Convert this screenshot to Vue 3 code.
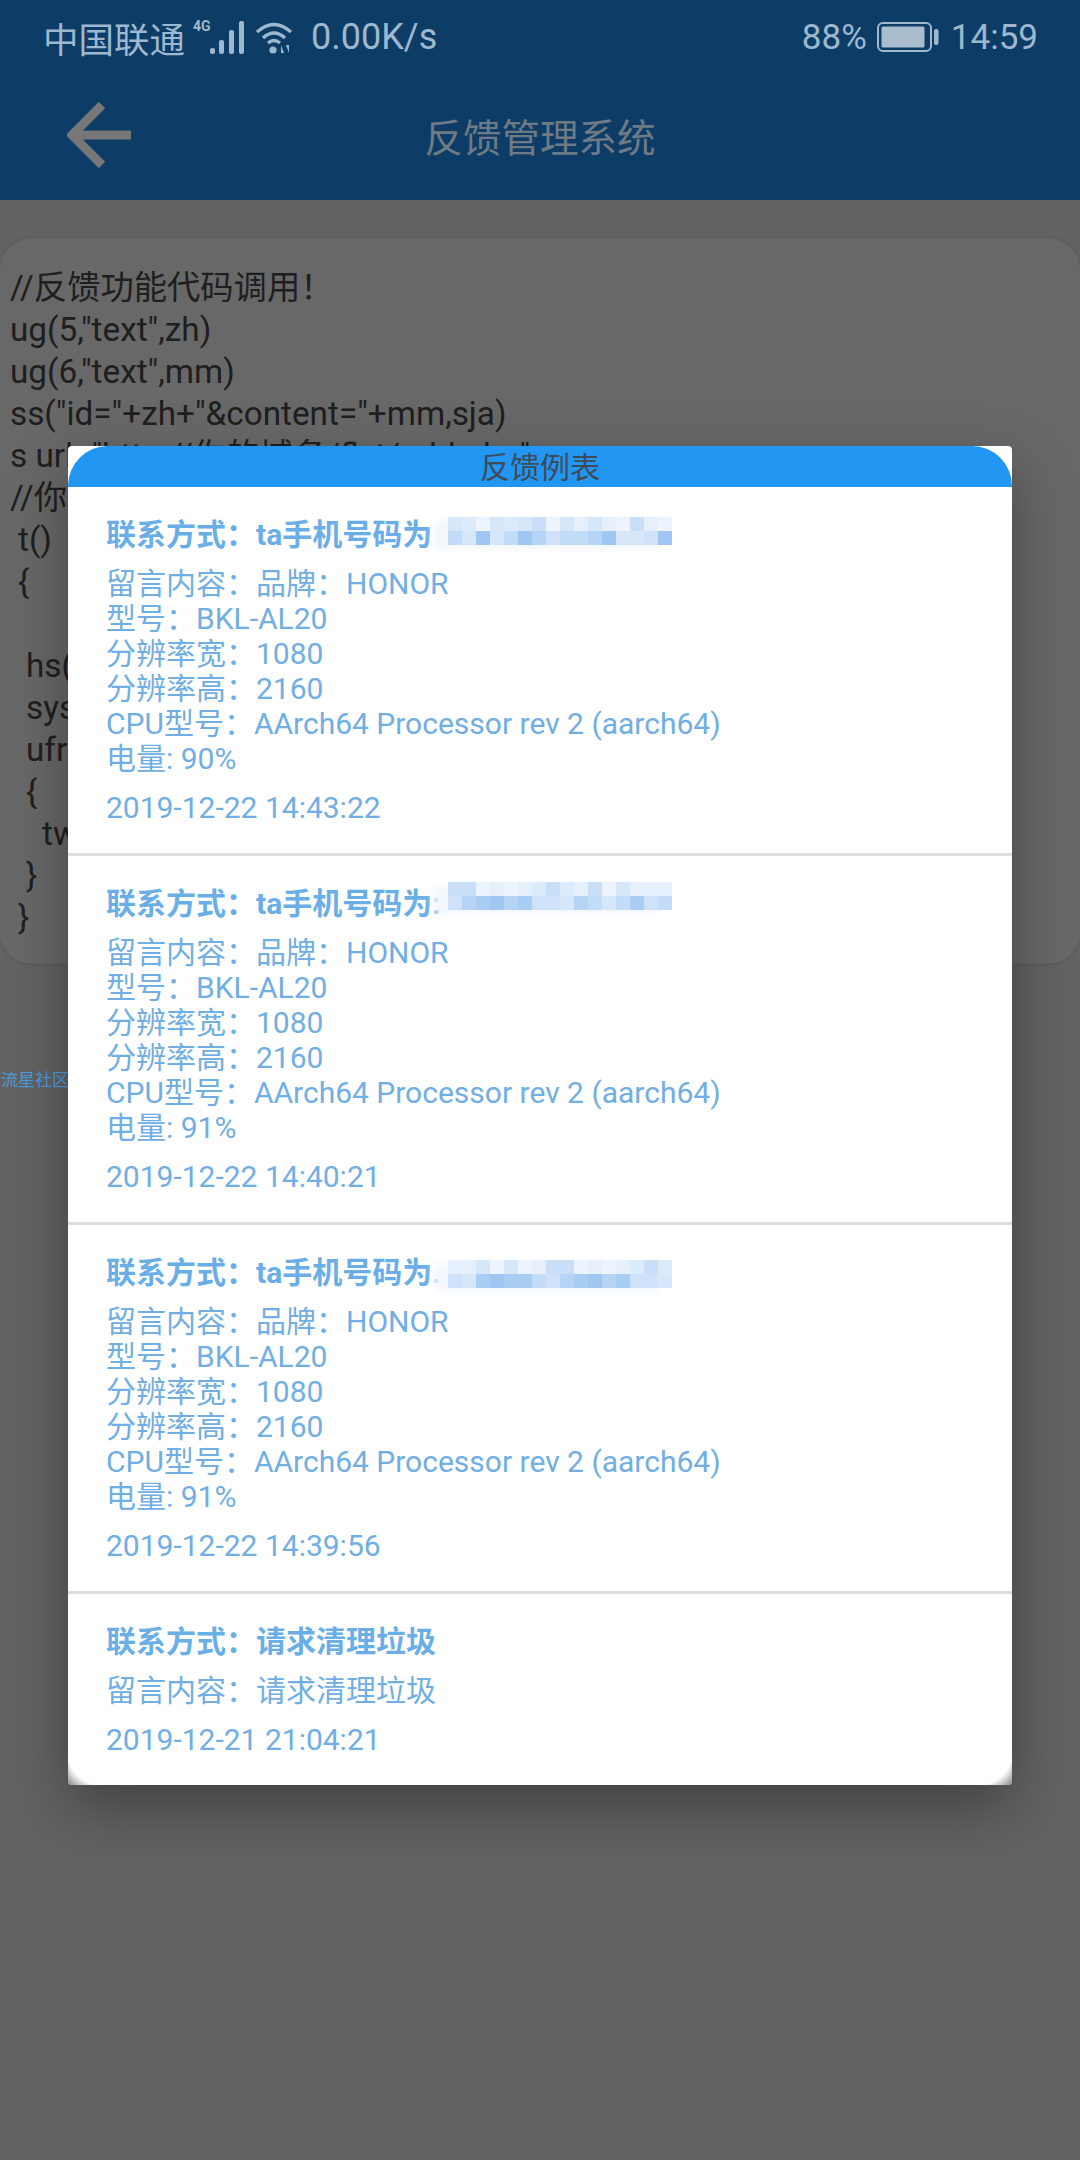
<script setup>
const paleRow = ['#d6e7fa', '#e6f0fc', '#c9dff8', '#edf4fd', '#dcebfb']
const deepRow = ['#a9cdf3', '#b6d4f5', '#c3dcf7', '#d6e7fa', '#9fc7f1', '#cfe2f9']

function mosaic(seed) {
  const cells = []
  let v = seed
  for (let i = 0; i < 32; i++) {
    v = (v * 31 + 17) % 97
    const row = i < 16 ? paleRow : deepRow
    cells.push(row[v % row.length])
  }
  return cells
}

const spec = [
  '留言内容：品牌：HONOR',
  '型号：BKL-AL20',
  '分辨率宽：1080',
  '分辨率高：2160',
  'CPU型号：AArch64 Processor rev 2 (aarch64)'
]

const items = [
  { title: '联系方式：ta手机号码为', masked: true, seed: 5, shift: 0, lines: [...spec, '电量: 90%'], date: '2019-12-22 14:43:22' },
  { title: '联系方式：ta手机号码为:', masked: true, seed: 11, shift: -4, lines: [...spec, '电量: 91%'], date: '2019-12-22 14:40:21' },
  { title: '联系方式：ta手机号码为.', masked: true, seed: 23, shift: 5, lines: [...spec, '电量: 91%'], date: '2019-12-22 14:39:56' },
  { title: '联系方式：请求清理垃圾', masked: false, lines: ['留言内容：请求清理垃圾'], date: '2019-12-21 21:04:21' }
]

const codeLines = [
  { t: '//反馈功能代码调用！', c: 'i0' },
  { t: 'ug(5,"text",zh)', c: 'i0' },
  { t: 'ug(6,"text",mm)', c: 'i0' },
  { t: 'ss("id="+zh+"&content="+mm,sja)', c: 'i0' },
  { t: 's url="http://你的域名/flxt/add.php"', c: 'i0' },
  { t: '//你的代码', c: 'i0' },
  { t: 't()', c: 'i1' },
  { t: '{', c: 'i1' },
  { t: '\u00a0', c: 'i0' },
  { t: 'hs()', c: 'i2' },
  { t: 'sys', c: 'i2' },
  { t: 'ufr', c: 'i2' },
  { t: '{', c: 'i2' },
  { t: 'tw', c: 'i3' },
  { t: '}', c: 'i2' },
  { t: '}', c: 'i1' }
]
</script>

<template>
  <div class="page">
    <header class="top">
      <div class="status">
        <span class="carrier">中国联通</span>
        <span class="net">4G</span>
        <svg class="signal" width="35" height="33" viewBox="0 0 35 33">
          <rect x="0" y="27" width="5" height="6" rx="2" fill="#9db8cf" />
          <rect x="9" y="19" width="5" height="14" rx="2" fill="#9db8cf" />
          <rect x="19" y="9" width="5" height="24" rx="2" fill="#9db8cf" />
          <rect x="29" y="0" width="5" height="33" rx="2" fill="#9db8cf" />
        </svg>
        <svg class="wifi" width="40" height="33" viewBox="0 0 40 33">
          <path d="M2 11 Q19 -4 36 11" fill="none" stroke="#9db8cf" stroke-width="3.4" />
          <path d="M8 17 Q19 7 30 17" fill="none" stroke="#9db8cf" stroke-width="3.4" />
          <path d="M13 22 Q19 17 25 22" fill="none" stroke="#9db8cf" stroke-width="3.2" />
          <circle cx="18" cy="29" r="3.6" fill="#9db8cf" />
          <path d="M26 32 L26 24 L29 32 Z M31 24 L34 32 L34 24 Z" fill="#9db8cf" />
        </svg>
        <span class="speed">0.00K/s</span>
        <span class="spacer"></span>
        <span class="pct">88%</span>
        <svg class="battery" width="62" height="30" viewBox="0 0 62 30">
          <rect x="1" y="1" width="53" height="28" rx="5" fill="none" stroke="#9db8cf" stroke-width="2" />
          <rect x="4.500" y="4.500" width="43" height="21" rx="1.500" fill="#a9bdcf" />
          <rect x="57" y="7" width="4.500" height="16" rx="2" fill="#9db8cf" />
        </svg>
        <span class="time">14:59</span>
      </div>
      <div class="nav">
        <svg class="back" width="66" height="66" viewBox="0 0 66 66">
          <path d="M35 3 L5 33 L35 63 M5 33 L64 33" fill="none" stroke="#777" stroke-width="9" />
        </svg>
        <div class="nav-title">反馈管理系统</div>
      </div>
    </header>

    <main class="main">
      <section class="code-card">
        <div v-for="(l, i) in codeLines" :key="i" class="code-line" :class="l.c">{{ l.t }}</div>
      </section>
      <div class="link">流星社区</div>
    </main>

    <div class="overlay"></div>

    <div class="modal">
      <div class="modal-head">反馈例表</div>
      <div class="modal-body">
        <article v-for="it in items" :key="it.date" class="item">
          <div class="title-row">
            <span class="title" :class="{ fixed: it.masked }">{{ it.title }}</span>
            <span v-if="it.masked" class="mask" :style="{ marginTop: it.shift + 'px' }">
              <i v-for="(c, n) in mosaic(it.seed)" :key="n" :style="{ background: c }"></i>
            </span>
          </div>
          <div class="lines">
            <div v-for="l in it.lines" :key="l">{{ l }}</div>
          </div>
          <div class="date">{{ it.date }}</div>
        </article>
      </div>
      <span class="corner left"></span>
      <span class="corner right"></span>
    </div>
  </div>
</template>

<style>
html, body { margin: 0; padding: 0; background: #ebebed; }
</style>

<style scoped>
.page {
  position: relative;
  width: 1080px;
  height: 2160px;
  overflow: hidden;
  background: #ebebed;
  font-family: Roboto, "Noto Sans CJK SC", sans-serif;
}
.top {
  position: relative;
  z-index: 3;
  height: 200px;
  background: #0d3d66;
  display: flex;
  flex-direction: column;
}
.status {
  height: 74px;
  display: flex;
  align-items: center;
  padding: 0 42px 0 43px;
  color: #9db8cf;
  font-size: 35px;
}
.carrier { font-size: 35.500px; }
.net { font-size: 14px; font-weight: 700; margin: -22px 0 0 8px; width: 17px; }
.wifi { margin-left: 10px; }
.speed { margin-left: 16px; font-size: 36px; }
.spacer { flex: 1; }
.battery { margin: 0 12px 0 10px; }
.nav {
  position: relative;
  flex: 1;
  display: grid;
  grid-template-columns: 1fr auto 1fr;
  align-items: center;
}
.back { margin: 0 0 4px 67px; grid-column: 1; grid-row: 1; }
.nav-title {
  grid-column: 2;
  grid-row: 1;
  color: #6e7b87;
  font-size: 38.500px;
  line-height: 46px;
  margin-top: 4px;
}
.main { padding-top: 38px; }
.code-card {
  height: 726px;
  box-sizing: border-box;
  padding: 29px 10px 0;
  background: #f8f8f8;
  border-radius: 32px;
  box-shadow: 0 0 3px rgba(0, 0, 0, 0.2);
}
.code-line {
  height: 42px;
  line-height: 42px;
  font-size: 33.300px;
  color: #4a4a4a;
  white-space: nowrap;
}
.i1 { padding-left: 8px; }
.i2 { padding-left: 16px; }
.i3 { padding-left: 32px; }
.link {
  position: relative;
  z-index: 2;
  margin: 106px 0 0 1px;
  font-size: 17px;
  line-height: 20px;
  color: #4f9bdf;
}
.overlay {
  position: absolute;
  inset: 0;
  z-index: 1;
  background: rgba(0, 0, 0, 0.58);
}
.modal {
  position: absolute;
  z-index: 4;
  left: 68px;
  top: 446px;
  width: 944px;
  background: #fff;
  border-radius: 4px;
  box-shadow: 0 24px 60px rgba(0, 0, 0, 0.34);
}
.modal-head {
  height: 41px;
  line-height: 43px;
  text-align: center;
  background: #2196f3;
  border-radius: 40px 40px 0 0;
  color: #3f4b57;
  font-size: 30px;
}
.corner {
  position: absolute;
  bottom: 0;
  width: 34px;
  height: 34px;
}
.corner.right {
  right: 0;
  border-bottom-right-radius: 4px;
  background: radial-gradient(circle at 0 0, #fff 0 34px, #dcdcdc 38px, #bbb 42px, #8c8c8c 47px);
}
.corner.left {
  left: 0;
  border-bottom-left-radius: 4px;
  background: radial-gradient(circle at 100% 0, #fff 0 34px, #dcdcdc 38px, #bbb 42px, #8c8c8c 47px);
}
.item {
  box-sizing: border-box;
  padding: 30px 39px 0 38px;
  min-height: 369px;
  border-bottom: 3px solid #dedede;
  color: #70aee3;
  font-size: 30px;
}
.item:last-child { min-height: 191px; border-bottom: 0; }
.title-row { display: flex; height: 36px; }
.title {
  font-weight: 700;
  line-height: 36px;
  color: #6aaee8;
  white-space: nowrap;
}
.title.fixed { width: 342px; flex: none; }
.mask {
  display: grid;
  grid-template-columns: repeat(16, 14px);
  grid-auto-rows: 14px;
  height: 28px;
  box-shadow: -14px 4px 8px #f2f7fd;
}
.mask i { display: block; }
.lines { margin-top: 12.500px; line-height: 35px; white-space: nowrap; }
.date { margin-top: 14px; line-height: 35px; }
</style>
